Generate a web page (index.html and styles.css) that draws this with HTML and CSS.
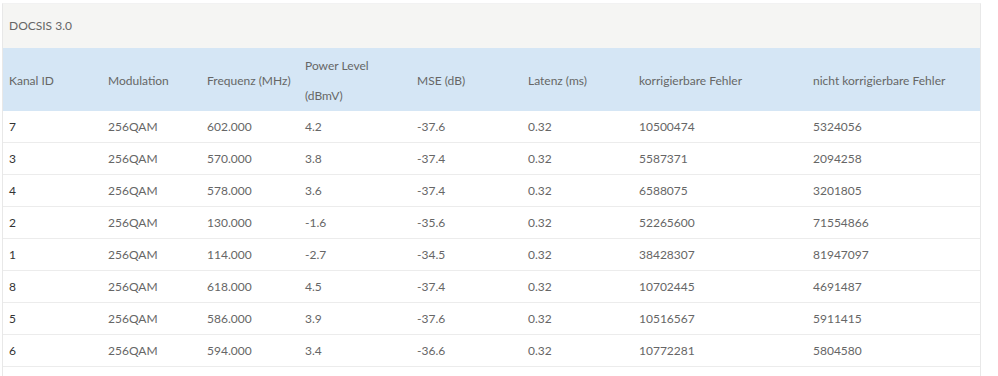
FILE: index.html
```html
<!DOCTYPE html>
<html>
<head>
<meta charset="utf-8">
<link rel="stylesheet" href="styles.css">
</head>
<body>
<div class="panel">
  <div class="panel-heading">DOCSIS 3.0</div>
  <table class="grid">
    <colgroup>
      <col class="c1"><col class="c2"><col class="c3"><col class="c4"><col class="c5"><col class="c6"><col class="c7"><col class="c8">
    </colgroup>
    <thead>
      <tr>
        <th>Kanal ID</th><th>Modulation</th><th>Frequenz (MHz)</th><th>Power Level<br>(dBmV)</th><th>MSE (dB)</th><th>Latenz (ms)</th><th>korrigierbare Fehler</th><th>nicht korrigierbare Fehler</th>
      </tr>
    </thead>
    <tbody>
      <tr><td class="id">7</td><td>256QAM</td><td>602.000</td><td>4.2</td><td>-37.6</td><td>0.32</td><td>10500474</td><td>5324056</td></tr>
      <tr><td class="id">3</td><td>256QAM</td><td>570.000</td><td>3.8</td><td>-37.4</td><td>0.32</td><td>5587371</td><td>2094258</td></tr>
      <tr><td class="id">4</td><td>256QAM</td><td>578.000</td><td>3.6</td><td>-37.4</td><td>0.32</td><td>6588075</td><td>3201805</td></tr>
      <tr><td class="id">2</td><td>256QAM</td><td>130.000</td><td>-1.6</td><td>-35.6</td><td>0.32</td><td>52265600</td><td>71554866</td></tr>
      <tr><td class="id">1</td><td>256QAM</td><td>114.000</td><td>-2.7</td><td>-34.5</td><td>0.32</td><td>38428307</td><td>81947097</td></tr>
      <tr><td class="id">8</td><td>256QAM</td><td>618.000</td><td>4.5</td><td>-37.4</td><td>0.32</td><td>10702445</td><td>4691487</td></tr>
      <tr><td class="id">5</td><td>256QAM</td><td>586.000</td><td>3.9</td><td>-37.6</td><td>0.32</td><td>10516567</td><td>5911415</td></tr>
      <tr><td class="id">6</td><td>256QAM</td><td>594.000</td><td>3.4</td><td>-36.6</td><td>0.32</td><td>10772281</td><td>5804580</td></tr>
      <tr class="empty"><td></td><td></td><td></td><td></td><td></td><td></td><td></td><td></td></tr>
    </tbody>
  </table>
</div>
</body>
</html>
```
FILE: styles.css
```css
html, body {
  margin: 0;
  padding: 0;
  background: #fff;
}
body {
  padding: 3px 0 0 2px;
  font-family: Lato, "Open Sans", sans-serif;
  font-size: 12px;
  color: #666;
}
.panel {
  width: 979px;
  border-left: 1px solid #e8e8e8;
  border-right: 1px solid #e8e8e8;
  border-top: 1px solid #f2f2f2;
  box-sizing: border-box;
}
.panel-heading {
  background: #f5f5f3;
  height: 44px;
  line-height: 44px;
  padding: 0 6px;
  color: #666;
}
.grid {
  width: 100%;
  border-collapse: collapse;
  table-layout: fixed;
}
.c1 { width: 99px; }
.c2 { width: 99px; }
.c3 { width: 98px; }
.c4 { width: 112px; }
.c5 { width: 111px; }
.c6 { width: 111px; }
.c7 { width: 174px; }
.grid th {
  background: #d5e6f5;
  font-weight: normal;
  text-align: left;
  color: #666;
  line-height: 30px;
  padding: 3px 6px 0;
  height: 59px;
  white-space: nowrap;
}
.grid td {
  padding: 0 6px;
  height: 31px;
  border-bottom: 1px solid #ececec;
  color: #666;
}
.grid td.id {
  color: #333;
}
.grid tr.empty td {
  border-bottom: none;
}
```
